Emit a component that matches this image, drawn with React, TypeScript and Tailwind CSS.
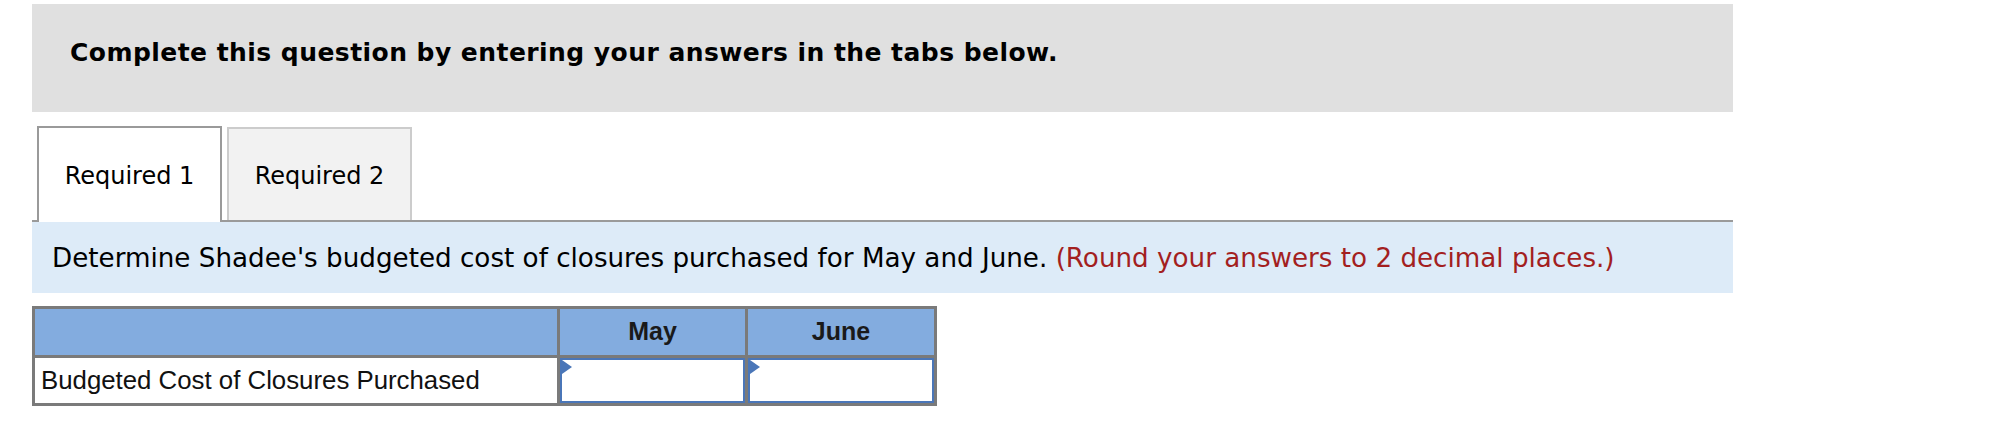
import React from 'react';

const VERDANA = "font-['DejaVu_Sans',Verdana,sans-serif]";
const ARIAL = "font-['Liberation_Sans',Arial,sans-serif]";

const tabs = ['Required 1', 'Required 2'];

const AnswerCell: React.FC = () => (
  <td className="border-[3px] border-[#7a7a7a] p-0 h-[48px]">
    <div className="relative h-full border-2 border-[#4a76b8] bg-white">
      <svg className="absolute left-0 top-0" width="10" height="14" viewBox="0 0 10 14">
        <polygon points="0,0 10,7 0,14" fill="#4a76b8" />
      </svg>
    </div>
  </td>
);

export default function App() {
  const active = 0;
  return (
    <div className="w-[1990px] min-h-[423px] bg-white pl-[32px] pt-[4px]">
      <div className="w-[1701px]">
        <div className="h-[108px] bg-[#e0e0e0] pl-[38px] pt-[34px]">
          <p className={`${VERDANA} font-bold text-[25px] leading-[30px] tracking-[0.45px] text-black`}>
            Complete this question by entering your answers in the tabs below.
          </p>
        </div>

        <div className="mt-[14px] flex items-end gap-[5px] pl-[5px] border-b-2 border-[#9a9a9a]">
          {tabs.map((t, i) => (
            <div
              key={t}
              className={`${VERDANA} text-[24px] text-black w-[185px] flex items-center justify-center pt-[2px] border-2 border-b-0 ${
                i === active
                  ? 'h-[96px] -mb-[2px] bg-white border-[#9a9a9a]'
                  : 'h-[93px] bg-[#f2f2f2] border-[#cccccc]'
              }`}
            >
              {t}
            </div>
          ))}
        </div>

        <div className={`${VERDANA} h-[71px] bg-[#ddebf8] pl-[20px] pt-[2px] flex items-center text-[26.2px] text-black`}>
          <span>
            Determine Shadee's budgeted cost of closures purchased for May and June.{' '}
            <span className="text-[#a31f1f]">(Round your answers to 2 decimal places.)</span>
          </span>
        </div>

        <table className={`${ARIAL} mt-[13px] w-[905px] border-collapse border-[3px] border-[#7a7a7a]`}>
          <thead>
            <tr className="bg-[#83acdf] h-[49px]">
              <th className="w-[525px] border-[3px] border-[#7a7a7a]"></th>
              <th className="w-[188px] border-[3px] border-[#7a7a7a] text-[25px] font-bold text-[#1a1a1a]">May</th>
              <th className="border-[3px] border-[#7a7a7a] text-[25px] font-bold text-[#1a1a1a]">June</th>
            </tr>
          </thead>
          <tbody>
            <tr className="h-[48px]">
              <td className="border-[3px] border-[#7a7a7a] pl-[6px] text-[25.8px] text-[#111]">
                Budgeted Cost of Closures Purchased
              </td>
              <AnswerCell />
              <AnswerCell />
            </tr>
          </tbody>
        </table>
      </div>
    </div>
  );
}
